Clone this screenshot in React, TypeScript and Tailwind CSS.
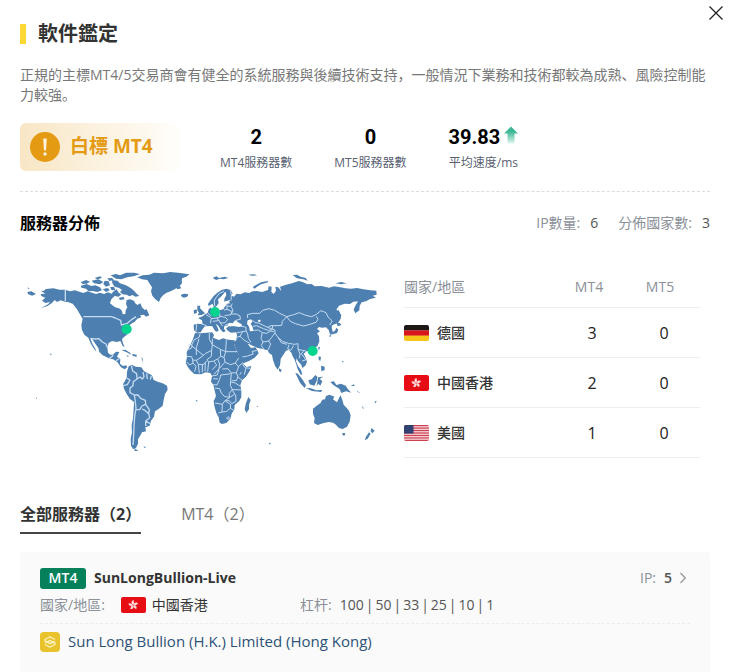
import React from "react";

const FONT = "font-['Open_Sans','Noto_Sans_CJK_SC',sans-serif]";

type Country = "de" | "hk" | "us";

function Flag({ code }: { code: Country }) {
  return (
    <svg viewBox="0 0 50 32" className="h-4 w-[25px] shrink-0 rounded-xs" aria-hidden="true">
      {code === "de" && (
        <>
          <rect width="50" height="11" fill="#1d1815" />
          <rect y="10.700" width="50" height="11" fill="#d8141c" />
          <rect y="21.300" width="50" height="11" fill="#f6c51b" />
        </>
      )}
      {code === "hk" && (
        <>
          <rect width="50" height="32" fill="#e60d14" />
          {[0, 72, 144, 216, 288].map((a) => (
            <path
              key={a}
              d="M24.500 15.500 C19.500 13 20 7 25.500 6 C24 9 28.500 11 24.500 15.500 Z"
              transform={`rotate(${a} 24.500 16)`}
              fill="#fbd9d9"
            />
          ))}
        </>
      )}
      {code === "us" && (
        <>
          <rect width="50" height="32" fill="#f7dfe2" />
          {[0, 1, 2, 3, 4, 5, 6].map((i) => (
            <rect key={i} y={i * 4.92} width="50" height="2.500" fill="#cf4152" />
          ))}
          <rect width="19" height="17" fill="#2f3f70" />
          {[3, 7.5, 12].map((y) => (
            <path key={y} d={`M2 ${y + 1}H18`} stroke="#52608e" strokeWidth="1" strokeDasharray="1.500 2" />
          ))}
        </>
      )}
    </svg>
  );
}

function WorldMap() {
  return (
    <svg
      viewBox="0 0 1080 600"
      className="h-auto w-full"
      role="img"
      aria-label="服務器分佈"
      fill="#4d7fb0"
      strokeLinejoin="round"
    >
      {/* North America */}
      <path d="M62 92 L70 93 L78 87 L100 85 L118 89 L135 89 L150 94 L165 91 L178 95 L190 99 L203 94 L216 98 L228 102 L240 98 L252 102 L264 97 L274 101 L282 93 L290 88 L296 98 L304 103 L296 110 L284 108 L274 118 L270 130 L284 141 L300 146 L306 153 L308 163 L316 162 L317 151 L322 142 L318 132 L320 120 L330 118 L342 122 L345 129 L352 135 L361 130 L366 142 L375 151 L382 160 L372 164 L360 166 L364 172 L352 176 L344 185 L336 190 L328 196 L334 204 L326 215 L321 224 L311 232 L306 238 L309 250 L314 261 L308 258 L301 243 L290 246 L276 243 L266 249 L262 262 L264 278 L272 285 L281 282 L288 275 L298 276 L291 290 L301 298 L300 311 L309 318 L318 316 L322 322 L314 328 L303 322 L292 306 L279 298 L265 294 L248 286 L238 276 L235 264 L225 250 L217 238 L211 235 L217 251 L226 266 L229 275 L221 265 L213 252 L205 233 L193 224 L186 210 L184 195 L188 177 L178 160 L170 146 L158 131 L146 127 L135 125 L122 121 L111 126 L104 120 L96 129 L82 138 L62 145 L84 133 L90 126 L76 129 L66 122 L76 113 L64 108 L62 102 L76 101 Z" />
      {/* Arctic islands */}
      <path d="M183 77 L200 72 L214 78 L226 76 L240 82 L246 91 L232 96 L218 93 L206 94 L198 86 L184 83 Z M182 67 L198 60 L210 65 L200 71 L188 72 Z M215 62 L235 58 L250 66 L240 73 L222 70 Z M224 54 L240 49 L246 54 L232 58 Z M254 62 L266 64 L270 76 L258 80 L250 72 Z M248 88 L262 84 L270 90 L258 96 Z M276 60 L292 62 L300 70 L318 76 L332 84 L342 92 L350 101 L358 108 L346 110 L338 105 L328 109 L320 104 L308 103 L300 96 L306 90 L296 83 L284 80 L277 70 Z M270 82 L282 80 L286 90 L275 91 Z M272 46 L288 42 L300 46 L318 38 L342 38 L360 42 L344 48 L322 52 L304 58 L288 56 Z M262 55 L276 54 L282 60 L268 63 Z M364 154 L380 148 L388 166 L378 170 L372 164 Z M296 114 L310 110 L314 118 L300 120 Z M22 96 L34 94 L48 102 L36 107 L24 102 Z M22 82 L30 86 L24 86 Z" />
      {/* Greenland and Iceland */}
      <path d="M352 52 L368 46 L388 44 L402 38 L430 40 L450 36 L474 38 L508 43 L494 50 L484 57 L486 70 L478 79 L464 88 L452 94 L440 98 L430 105 L422 114 L417 126 L406 118 L397 107 L393 94 L396 82 L388 70 L382 60 L366 58 Z M483 105 L492 101 L504 103 L503 109 L492 113 L484 109 Z M468 82 L480 78 L484 85 L472 88 Z" />
      {/* Caribbean */}
      <path d="M304 270 L316 269 L330 278 L334 284 L320 277 Z M337 282 L350 284 L350 290 L338 288 Z M320 286 L328 288 L322 290 Z M364 292 L368 296 L368 308 Z M90 280 L96 284 L92 286 Z M48 412 L51 415 L48 417 Z M527 420 L532 421 L529 424 Z" />
      {/* South America */}
      <path d="M326 319 L335 314 L347 320 L364 322 L372 334 L384 340 L396 346 L401 360 L413 365 L428 370 L441 377 L443 389 L435 402 L431 420 L428 437 L416 447 L405 454 L402 470 L393 482 L389 497 L376 502 L378 514 L366 517 L360 528 L354 538 L354 551 L348 564 L340 568 L333 557 L332 536 L336 518 L335 496 L339 475 L341 448 L342 426 L330 417 L320 402 L312 386 L309 373 L315 362 L320 353 L321 335 Z M345 566 L356 572 L343 573 Z M370 560 L379 560 L374 564 Z" />
      <g fill="none" stroke="#c5dcf2" strokeWidth="4">
        <path d="M136 89 V124 M190 170 H274 L286 174 L302 181 L304 195 L322 190 L336 178 L348 170 M211 235 L226 237 L237 236 L247 246 L258 252 L262 262 M268 294 L276 290 L280 283 M288 302 L297 297" />
        <path d="M334 316 L338 333 L350 341 L351 357 L340 365 L339 377 L330 384 L330 398 L343 405 L346 425 L348 445 L344 470 L342 499 L341 526 L339 555 M309 377 L322 374 L330 360 L320 354 M351 357 L360 351 L367 357 L372 350 L369 336 M380 340 L382 357 M394 347 L391 359 M343 405 L354 405 L362 415 L376 421 L377 433 L366 438 L359 449 L347 448 M377 433 L388 449 L386 461 L376 452 L366 447 M386 461 L389 473 L377 483 L377 498 M377 483 L390 491" />
      </g>

      <g transform="translate(480 0)">
        {/* Europe and Asia */}
        <path d="M84 132 L92 120 L101 108 L112 98 L125 90 L139 86 L152 90 L158 100 L152 106 L162 110 L170 101 L181 103 L195 97 L207 99 L218 94 L231 93 L246 96 L264 90 L266 79 L275 80 L274 96 L281 102 L288 92 L286 80 L295 82 L304 94 L300 80 L318 74 L336 70 L356 63 L368 66 L382 73 L395 72 L404 79 L425 78 L447 83 L462 79 L481 82 L496 85 L513 86 L531 84 L550 88 L572 91 L589 92 L590 104 L578 107 L588 113 L570 117 L558 124 L545 127 L539 137 L538 151 L526 160 L521 149 L526 137 L534 124 L520 125 L510 132 L494 131 L477 137 L469 149 L476 153 L484 166 L480 180 L473 190 L463 193 L455 197 L456 207 L459 218 L450 223 L446 210 L438 202 L426 203 L417 201 L411 207 L420 214 L411 220 L417 229 L418 244 L413 257 L403 266 L391 271 L380 274 L371 281 L377 293 L381 306 L376 317 L367 324 L364 314 L354 304 L350 295 L348 304 L354 318 L363 330 L367 345 L361 343 L353 327 L349 314 L344 299 L338 289 L334 278 L326 269 L318 272 L310 284 L302 297 L300 316 L293 329 L285 317 L279 300 L276 285 L267 279 L263 271 L248 267 L231 263 L218 257 L207 252 L204 253 L213 264 L226 262 L232 271 L236 280 L224 293 L207 303 L190 310 L184 305 L177 289 L170 271 L163 254 L160 247 L169 241 L171 226 L169 217 L153 218 L144 213 L138 205 L148 198 L164 199 L178 201 L187 199 L184 192 L174 187 L166 180 L158 190 L147 188 L142 197 L133 197 L132 206 L137 214 L129 217 L121 208 L115 197 L107 191 L114 205 L116 213 L108 215 L103 209 L97 199 L88 198 L75 199 L68 207 L62 217 L51 218 L42 211 L41 194 L53 191 L68 193 L66 181 L54 174 L68 169 L75 163 L83 159 L86 148 L93 142 L96 152 L105 155 L118 151 L130 148 L134 141 L141 131 L151 130 L144 124 L129 127 L127 116 L138 104 L135 96 L125 108 L114 118 L116 129 L110 138 L102 143 L98 131 L86 138 Z" />
        <path d="M52 137 L61 137 L60 145 L66 151 L75 160 L65 165 L53 166 L57 158 L52 151 Z M41 151 L50 148 L51 158 L42 162 Z M0 43 L28 43 L18 51 L6 53 L4 66 L0 72 Z M3 105 L15 101 L25 104 L19 111 L8 112 Z M98 53 L110 49 L117 54 L135 50 L145 54 L130 58 L120 56 L108 60 Z M218 81 L229 74 L243 67 L263 63 L264 67 L243 73 L231 80 L224 86 Z M338 45 L351 44 L362 50 L377 54 L383 62 L370 58 L351 55 Z M205 44 L222 43 L232 46 L214 47 Z M466 70 L484 66 L499 70 L484 73 Z" />
        {/* East Asian islands */}
        <path d="M476 148 L481 165 L482 178 L476 175 L474 158 Z M469 186 L480 190 L484 195 L473 199 Z M469 203 L475 209 L471 219 L458 223 L449 224 L459 216 L465 212 Z M446 228 L454 224 L451 231 Z M414 262 L420 261 L417 272 Z M416 289 L423 291 L421 303 L416 299 Z M423 317 L434 320 L434 330 L424 334 Z M297 325 L305 329 L302 337 L297 333 Z M346 339 L354 341 L368 359 L378 376 L374 384 L361 370 Z M377 384 L393 385 L409 391 L427 390 L423 396 L396 393 Z M385 361 L395 358 L406 345 L412 350 L410 363 L403 377 L389 373 Z M414 352 L430 350 L419 356 L427 364 L421 377 L415 371 L410 379 Z M451 366 L462 364 L469 375 L483 371 L497 377 L504 388 L514 398 L498 394 L484 399 L478 386 L461 376 Z M512 378 L522 373 L524 378 Z M529 390 L541 400 L534 397 Z M545 437 L552 445 L549 446 Z M583 426 L590 422 L587 430 Z M486 303 L491 304 L488 308 Z" />
        {/* Africa */}
        <path d="M45 219 L61 220 L80 218 L96 217 L102 224 L99 233 L117 240 L129 235 L145 239 L164 241 L162 253 L171 273 L179 291 L190 313 L200 321 L214 318 L209 333 L198 350 L186 361 L181 375 L184 392 L184 412 L177 424 L164 435 L163 448 L155 461 L151 476 L139 489 L126 492 L119 488 L116 472 L109 459 L103 438 L101 424 L108 408 L103 388 L100 374 L93 365 L96 348 L91 339 L77 337 L63 343 L43 342 L30 330 L23 320 L17 309 L21 292 L20 277 L31 256 L39 237 Z" />
        <path d="M205 411 L212 420 L207 434 L207 448 L199 459 L194 447 L198 429 Z M230 437 L234 439 L231 442 Z M49 422 L54 422 L51 425 Z M266 549 L272 548 L270 554 Z" />
        {/* Oceania */}
        <path d="M427 419 L435 418 L438 408 L449 404 L463 410 L459 418 L471 427 L477 414 L482 406 L487 420 L491 434 L501 445 L507 452 L512 466 L509 485 L501 500 L488 507 L477 504 L466 493 L459 488 L446 486 L431 489 L413 495 L402 489 L404 475 L399 461 L399 446 L413 435 L421 430 Z M487 519 L496 519 L493 528 L488 525 Z M574 504 L584 512 L577 520 L572 514 Z M567 517 L572 521 L563 536 L554 541 L558 530 Z" />
        {/* Inland seas */}
        <path d="M203 181 L213 178 L218 184 L212 191 L218 201 L220 213 L210 214 L207 200 L201 191 Z M150 202 L154 197 L148 190 Z M160 186 L170 185 L175 188 L164 190 Z M234 180 L242 179 L241 185 L235 186 Z M128 107 L137 95 L139 105 L133 116 L133 125 L149 120 L150 124 L132 130 L128 141 L118 147 L123 130 Z" fill="white" />
        <g fill="none" stroke="#c5dcf2" strokeWidth="3">
          <path d="M203 174 L202 164 L218 160 L239 160 L248 151 L267 146 L284 151 L299 160 L320 170 L307 184 L305 196 L291 197 L273 197 L262 202 L246 194 L235 189 L225 188 L219 181 M320 170 L341 164 L358 158 L377 166 L395 170 L409 163 L423 152 L438 158 L444 171 L457 183 L449 195 M320 170 L331 184 L346 191 L371 198 L390 193 L408 187 L414 178 L409 169 M262 202 L274 206 L285 210 L285 219 L294 232 L307 244 L326 250 L343 253 L354 251 L354 268 L366 271 L378 273 M278 197 L276 209 L265 211 L250 206 L230 197 L219 199 M219 211 L235 210 L247 218 L260 220 L272 213 L282 215 M247 218 L243 235 L249 246 L244 257 L251 267 M285 219 L275 232 L266 243 L272 252 L264 270 M249 246 L267 243 M294 232 L304 248 L320 253 M327 254 L323 266 L332 271 L341 257 M354 266 L360 282 L358 295 M371 274 L363 281 L373 292 L377 300 L366 303" />
          <path d="M183 198 L198 202 L198 212 L203 222 L205 235 L213 247 M188 215 L180 229 L170 232 M198 213 L171 218 M180 229 L192 240 L209 250 M187 291 L203 288 L220 282 L216 274 L230 272 M63 191 L80 197 M50 193 L48 214 M78 164 L88 170 L94 175 L91 190 M93 176 L111 174 L115 182 L98 184 M83 158 L93 169 M118 152 L120 171 L110 174 M119 168 L137 173 L143 179 L134 189 L120 188 L116 178 M120 188 L128 198 M135 196 L145 191 M132 150 L141 148 L155 154 L153 164 L134 167 M141 148 L141 138 L153 139 L159 151 L154 162 L169 162 L180 168 L181 178 L167 181 M141 138 L140 131 M152 140 L157 131 M104 138 L103 120 L117 101 L132 94 M151 91 L154 103 L153 122" />
          <path d="M60 221 L58 231 L42 240 L36 253 L24 256 M36 253 L35 264 L21 270 M36 258 L70 286 L77 280 L95 271 L97 254 L88 238 L88 219 M97 254 L97 236 M97 254 L121 268 L137 275 M139 238 L137 275 H172 M95 271 L94 289 L81 299 L86 306 L101 303 L113 297 L122 289 L121 268 M70 286 L57 296 L49 301 L38 300 L35 290 L21 289 M49 301 L55 313 L70 314 L81 302 M38 300 L39 309 L29 315 L20 306 M39 309 L48 319 L44 335 M55 313 L58 340 M67 313 L67 337 M76 306 L75 334 M86 306 L83 335 M101 303 L110 315 L97 329 M113 297 L119 312 L117 327 L102 343 M137 275 L132 292 L122 289 M132 292 L135 307 L127 315 L119 325 M135 307 L152 314 L166 309 L176 294 M166 309 L175 320 L188 309 M176 320 L169 338 L154 339 L144 326 L127 327 M117 327 L112 345 L96 348 M122 345 L119 358 L111 375 L98 374 M122 345 L154 341 M154 341 L152 361 L151 376 L157 389 L147 401 L149 412 L133 409 L124 399 L119 386 L105 384 M169 338 L174 351 L169 362 L155 362 M174 351 L186 361 M198 324 L193 344 M188 313 L195 323 L210 325 M184 337 L179 344 M152 366 L166 369 L181 379 M157 389 L171 389 L183 390 M157 389 L164 403 L151 411 L134 423 L127 433 L105 429 M134 423 L148 422 L155 431 L168 424 L167 403 M127 433 L126 456 L115 459 M126 456 L139 455 L151 445 L160 450 M138 424 L152 434 L151 445 M144 470 L149 474 L144 479 L140 474 Z M100 356 L114 357 M57 237 L49 263 L49 285" />
        </g>
      </g>
      <g fill="#05d48e">
        <circle cx="320" cy="208" r="15" />
        <circle cx="585" cy="156" r="15" />
        <circle cx="878" cy="273" r="15" />
      </g>
    </svg>
  );
}

function Stat({ value, label, up }: { value: string; label: string; up?: boolean }) {
  return (
    <div className="flex flex-col items-center gap-0.5">
      <dd className="order-1 flex h-7 items-center gap-1 font-['Roboto',sans-serif] text-xl leading-7 font-bold text-black">
        {value}
        {up && (
          <svg viewBox="0 0 14 18" className="mb-1 h-[18px] w-[14px]" aria-label="上升">
            <defs>
              <linearGradient id="rise" x1="0" y1="0" x2="0" y2="1">
                <stop offset="0.300" stopColor="#3bb795" />
                <stop offset="1" stopColor="#e2f7f0" />
              </linearGradient>
            </defs>
            <path d="M7 0.500 L14 7.500 H10.500 V17.500 H3.500 V7.500 H0 Z" fill="url(#rise)" />
          </svg>
        )}
      </dd>
      <dt className="order-2 text-xs leading-5 text-[#5a6172]">{label}</dt>
    </div>
  );
}

const rows: { code: Country; name: string; mt4: number; mt5: number }[] = [
  { code: "de", name: "德國", mt4: 3, mt5: 0 },
  { code: "hk", name: "中國香港", mt4: 2, mt5: 0 },
  { code: "us", name: "美國", mt4: 1, mt5: 0 },
];

const leverages = [100, 50, 33, 25, 10, 1];

export default function App() {
  return (
    <main lang="zh" className={`relative min-h-screen bg-white px-5 pt-[22px] text-sm text-[#333] ${FONT}`}>
      <button type="button" aria-label="關閉" className="absolute top-[3px] right-1 flex size-5 items-center justify-center">
        <svg viewBox="0 0 14 14" className="size-[14px]" stroke="#222" strokeWidth="1.300" fill="none">
          <path d="M0.500 0.500 L13.500 13.500 M13.500 0.500 L0.500 13.500" />
        </svg>
      </button>

      <h1 className="flex h-6 items-center gap-3 text-xl leading-6 font-bold text-[#333]">
        <span className="h-5 w-1.5 bg-[#fdd835]" />
        軟件鑑定
      </h1>
      <p className="mt-[19px] leading-5 text-[#777]">
        正規的主標MT4/5交易商會有健全的系統服務與後續技術支持，一般情況下業務和技術都較為成熟、風險控制能力較強。
      </p>

      <section className="mt-[18px] flex h-[69px] items-start border-b border-dashed border-[#dcdcdc]">
        <div className="flex h-12 w-40 items-center gap-2.5 rounded-md bg-linear-to-r from-[#f8e6c5] to-[#fffefb] pl-2.5 text-[19px] font-bold text-[#e49a12]">
          <svg viewBox="0 0 30 30" className="size-[30px]" aria-hidden="true">
            <circle cx="15" cy="15" r="15" fill="#e49a12" />
            <path d="M13.200 6.500 H16.800 L16 18.500 H14 Z" fill="#fff3dc" />
            <circle cx="15" cy="22" r="1.700" fill="#fff3dc" />
          </svg>
          白標 MT4
        </div>
        <dl className="ml-10 flex gap-[42px]">
          <Stat value="2" label="MT4服務器數" />
          <Stat value="0" label="MT5服務器數" />
          <Stat value="39.83" label="平均速度/ms" up />
        </dl>
      </section>

      <div className="mt-[19px] flex h-6 items-center justify-between">
        <h2 className="text-base font-bold text-black">服務器分佈</h2>
        <dl className="flex items-center text-[#8b9099]">
          <dt>IP數量:</dt>
          <dd className="ml-2.5 text-[#555]">6</dd>
          <dt className="ml-5">分佈國家數:</dt>
          <dd className="ml-2.5 text-[#555]">3</dd>
        </dl>
      </div>

      <section className="mt-[25px] flex items-start gap-6">
        <div className="min-w-0 flex-1">
          <WorldMap />
        </div>
        <table className="mt-[7px] mr-2.5 w-[296px] shrink-0 table-fixed border-collapse">
          <thead>
            <tr className="h-10 border-b border-[#efefef] text-[#8b9099]">
              <th scope="col" className="text-left font-normal">國家/地區</th>
              <th scope="col" className="w-[72px] pr-1.5 font-normal">MT4</th>
              <th scope="col" className="w-[72px] pr-2 font-normal">MT5</th>
            </tr>
          </thead>
          <tbody>
            {rows.map((r) => (
              <tr key={r.code} className="h-[50px] border-b border-[#efefef]">
                <th scope="row" className="pt-0.5 font-medium">
                  <span className="flex items-center gap-2">
                    <Flag code={r.code} />
                    {r.name}
                  </span>
                </th>
                <td className="pt-0.5 text-center text-base text-[#222]">{r.mt4}</td>
                <td className="pt-0.5 text-center text-base text-[#222]">{r.mt5}</td>
              </tr>
            ))}
          </tbody>
        </table>
      </section>

      <div role="tablist" className="mt-9 flex gap-10 text-base leading-9">
        <button type="button" role="tab" aria-selected="true" className="border-b-2 border-[#444] font-bold">
          全部服務器（2）
        </button>
        <button type="button" role="tab" aria-selected="false" className="border-b-2 border-transparent text-[#777]">
          MT4（2）
        </button>
      </div>

      <article className="mt-[18px] h-[120px] rounded-t-sm bg-[#fafafa] px-5 pt-[15px]">
        <div className="flex h-[22px] items-center">
          <span className="flex h-[21px] w-[46px] items-center justify-center rounded-[3px] bg-[#04805a] font-semibold text-white">
            MT4
          </span>
          <strong className="ml-2 font-bold">SunLongBullion-Live</strong>
          <button type="button" className="mr-1 ml-auto flex items-center">
            <span className="text-[#8b9099]">IP:</span>
            <span className="ml-2 font-semibold text-[#555]">5</span>
            <svg viewBox="0 0 6 12" className="ml-2 h-3 w-1.5" fill="none" stroke="#999" strokeWidth="1.300">
              <path d="M0.500 1 L5.300 6 L0.500 11" />
            </svg>
          </button>
        </div>
        <div className="grid h-[35px] grid-cols-[260px_1fr] items-start border-b border-dashed border-[#ececec] pt-1 leading-6">
          <div className="flex items-center">
            <span className="text-[#8b9099]">國家/地區:</span>
            <span className="ml-4 flex items-center gap-1.5">
              <Flag code="hk" />
              中國香港
            </span>
          </div>
          <div className="flex items-center">
            <span className="text-[#8b9099]">杠杆:</span>
            <span className="ml-2 flex gap-0.5 text-[#555]">
              {leverages.map((n, i) => (
                <React.Fragment key={n}>
                  {i > 0 && <span>|</span>}
                  <span>{n}</span>
                </React.Fragment>
              ))}
            </span>
          </div>
        </div>
        <a href="#company" className="mt-2 flex h-5 items-center gap-2 text-[15px] text-[#2d5278]">
          <svg viewBox="0 0 20 20" className="size-5" aria-hidden="true">
            <rect width="20" height="20" rx="4" fill="#e9c32b" />
            <path
              d="M15 7.500 L10 4.800 L5 7.500 V9 L10 11.500 L15 9.500 M5 10.800 L10 8.500 L15 11 V12.500 L10 15.200 L5 12.500"
              fill="none"
              stroke="#fbeeb4"
              strokeWidth="1.400"
              strokeLinejoin="round"
            />
          </svg>
          Sun Long Bullion (H.K.) Limited (Hong Kong)
        </a>
      </article>
    </main>
  );
}
